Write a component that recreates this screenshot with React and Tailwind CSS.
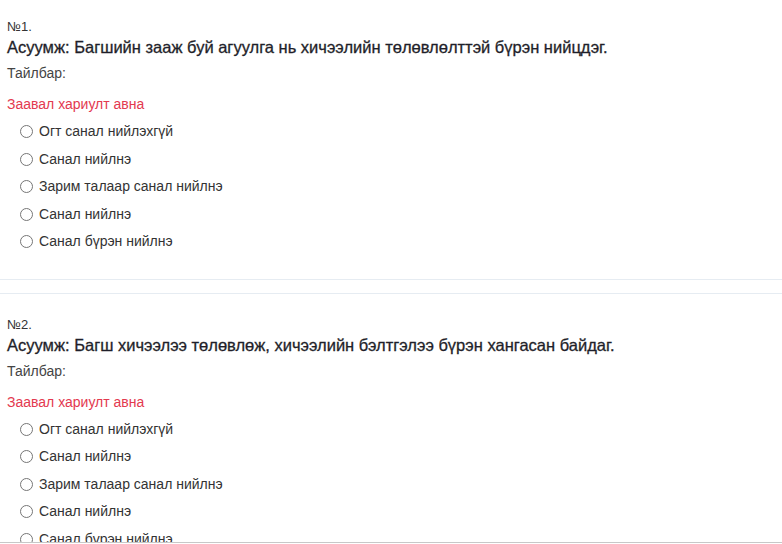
const QUESTIONS = [
  { no: 1, text: 'Багшийн зааж буй агуулга нь хичээлийн төлөвлөлттэй бүрэн нийцдэг.' },
  { no: 2, text: 'Багш хичээлээ төлөвлөж, хичээлийн бэлтгэлээ бүрэн хангасан байдаг.' },
];

const OPTIONS = [
  'Огт санал нийлэхгүй',
  'Санал нийлнэ',
  'Зарим талаар санал нийлнэ',
  'Санал нийлнэ',
  'Санал бүрэн нийлнэ',
];

const Question = ({ q, first }) => (
  <div className={`border-y border-[#e6ecf2] px-[7px] pt-[22px] ${first ? 'pb-[23px]' : 'pb-[24px]'}`}>
    <div className="text-[13px] leading-[18px] text-[#333]">№{q.no}.</div>
    <div className="text-[16.5px] leading-[23px] text-[#1f1f2a] [-webkit-text-stroke:0.3px_#1f1f2a]">
      Асуумж: {q.text}
    </div>
    <div className="mt-[4px] text-[14px] leading-[20px] text-[#444]">Тайлбар:</div>
    <div className="mt-[11px] text-[14px] leading-[20px] text-[#e3394f]">Заавал хариулт авна</div>
    <div className="mt-[4px] pl-[13px]">
      {OPTIONS.map((opt, i) => (
        <label key={i} className="flex h-[27.5px] items-center gap-[6px] text-[14px] text-[#333]">
          <span className="h-[13px] w-[13px] rounded-full border border-[#767676] bg-white" />
          {opt}
        </label>
      ))}
    </div>
  </div>
);

export default function App() {
  return (
    <div className="min-h-screen bg-white font-['Liberation_Sans',Arial,sans-serif]">
      <div className="-mt-[5px] flex flex-col gap-[13px]">
        {QUESTIONS.map((q, i) => (
          <Question key={q.no} q={q} first={i === 0} />
        ))}
      </div>
      <div className="fixed bottom-0 left-0 right-0 h-[2px] border-t border-[#c8c8c8] bg-white" />
    </div>
  );
}
